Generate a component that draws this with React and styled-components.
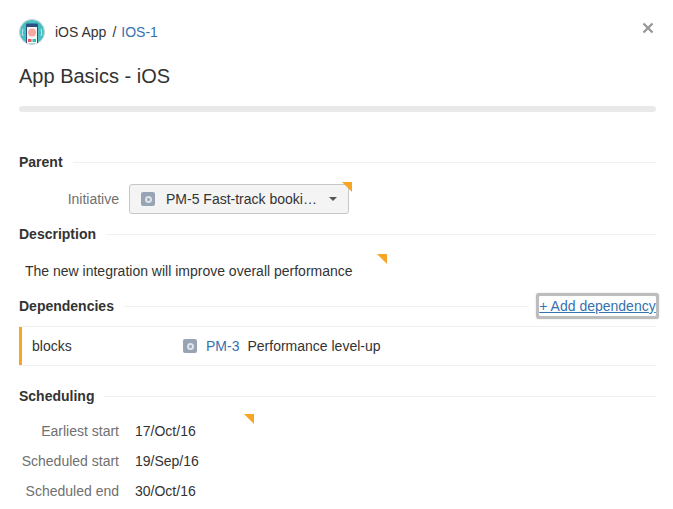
import React from 'react'
import styled, { createGlobalStyle } from 'styled-components'

const GlobalStyle = createGlobalStyle`
    html, body {
        margin: 0;
        background: #fff;
    }
    body {
        font-family: "Liberation Sans", Arial, sans-serif;
        font-size: 14px;
        line-height: 20px;
        color: #333;
    }
`
const Page = styled.div`
    position: relative;
    box-sizing: border-box;
    width: 673px;
    height: 509px;
    padding: 0 17px 0 19px;
    overflow: hidden;
`
const Breadcrumbs = styled.div`
    display: flex;
    align-items: center;
    height: 26px;
    padding-top: 19px;
`
const Avatar = styled.svg`
    width: 26px;
    height: 26px;
    margin-right: 10px;
    flex: none;
`
const Crumb = styled.span`
    margin-right: ${p => p.$gap || 5}px;
`
const Link = styled.a`
    color: #3572b0;
    text-decoration: none;
`
const Close = styled.svg`
    position: absolute;
    top: 22px;
    right: 19px;
    width: 12px;
    height: 12px;
`
const Title = styled.h1`
    margin: 16px 0 0;
    font-size: 20px;
    line-height: 30px;
    font-weight: 400;
`
const Progress = styled.div`
    height: 6px;
    margin: 15px 0 40px;
    border-radius: 3px;
    background: #e9e9e9;
`
const Heading = styled.div`
    display: flex;
    align-items: center;
    height: 20px;
    margin-top: ${p => p.$top || 0}px;
    font-weight: 700;
    &::before {
        content: '';
        order: 1;
        flex: 1;
        height: 1px;
        margin-left: 10px;
        background: #f0f0f0;
    }
`
const AddLink = styled.a`
    order: 2;
    width: 117px;
    margin-left: 10px;
    color: #3572b0;
    font-weight: 400;
    text-align: center;
    text-decoration: underline;
    white-space: nowrap;
    border-radius: 1px;
    box-shadow: 0 0 0 3px #bdbdbd, 0 0 2px 3px #d4d4d4;
`
const FieldRow = styled.div`
    position: relative;
    display: flex;
    align-items: center;
    height: ${p => p.$height || 30}px;
    margin-top: ${p => p.$top || 0}px;
`
const Label = styled.div`
    width: 100px;
    text-align: right;
    color: #707070;
    white-space: nowrap;
`
const Value = styled.div`
    margin-left: 16px;
`
const Select = styled.div`
    display: flex;
    align-items: center;
    width: 218px;
    height: 28px;
    margin-left: 10px;
    border: 1px solid #c7c7c7;
    border-radius: 3px;
    background: #f4f4f4;
`
const SelectText = styled.span`
    flex: 1;
    margin-left: 11px;
    white-space: nowrap;
`
const Caret = styled.span`
    width: 0;
    height: 0;
    margin-right: 11px;
    border-left: 4px solid transparent;
    border-right: 4px solid transparent;
    border-top: 4px solid #555;
`
const IssueIcon = styled.span`
    display: inline-flex;
    align-items: center;
    justify-content: center;
    flex: none;
    width: 14px;
    height: 14px;
    margin-left: ${p => p.$left || 0}px;
    border-radius: 2px;
    background: #97a4b4;
    &::after {
        content: '';
        width: 7px;
        height: 7px;
        box-sizing: border-box;
        border: 2px solid #dfe4ea;
        border-radius: 50%;
    }
`
const Flag = styled.span`
    position: absolute;
    top: ${p => p.$top}px;
    left: ${p => p.$left}px;
    width: 0;
    height: 0;
    border-top: 10px solid #f6a623;
    border-left: 10px solid transparent;
`
const Description = styled.div`
    position: relative;
    height: 30px;
    margin: 12px 0 0;
    padding: 5px 0 0 6px;
    box-sizing: border-box;
    white-space: nowrap;
`
const DependencyRow = styled.div`
    display: flex;
    align-items: center;
    height: 38px;
    margin-top: 10px;
    border-top: 1px solid #f0f0f0;
    border-bottom: 1px solid #f0f0f0;
    box-shadow: inset 3px 0 0 #f6a623;
`
const LinkType = styled.div`
    width: 151px;
    padding-left: 13px;
`
const IssueKey = styled(Link)`
    margin-left: 9px;
`
const IssueSummary = styled.span`
    margin-left: 8px;
`

function Field({ label, value, top, children }) {
    return (
        <FieldRow $top={top}>
            <Label>{label}</Label>
            <Value>{value}</Value>
            {children}
        </FieldRow>
    )
}

export default function App() {
    return (
        <Page>
            <GlobalStyle />
            <Breadcrumbs>
                <Avatar viewBox="0 0 26 26">
                    <circle cx="13" cy="13" r="12.5" fill="#45c1c4" stroke="#c9d0d2" strokeWidth="1" />
                    <path d="M7 24V5.5q0-1 1-1h10q1 0 1 1V24z" fill="#2e4f7f" />
                    <path d="M8 24.5V8h10v16.5z" fill="#f7f7f7" />
                    <circle cx="13" cy="13.5" r="4" fill="#f7a9a0" />
                    <rect x="9" y="20" width="3.5" height="3" fill="#f2545b" />
                    <rect x="13.5" y="20" width="3.5" height="3" fill="#35bdb8" />
                    <path d="M4 10q-1.5 3.5 0 7M22 10q1.5 3.5 0 7" fill="none" stroke="#bfeaea" strokeWidth="1" />
                </Avatar>
                <Crumb $gap={6}>iOS App</Crumb>
                <Crumb>/</Crumb>
                <Link>IOS-1</Link>
            </Breadcrumbs>
            <Close viewBox="0 0 12 12">
                <path d="M1.5 1.5l9 9M10.5 1.5l-9 9" stroke="#999" strokeWidth="2.4" />
            </Close>
            <Title>App Basics - iOS</Title>
            <Progress />

            <Heading>Parent</Heading>
            <FieldRow $top={12}>
                <Label>Initiative</Label>
                <Select>
                    <IssueIcon $left={11} />
                    <SelectText>PM-5 Fast-track booki…</SelectText>
                    <Caret />
                </Select>
                <Flag $top={-2} $left={323} />
            </FieldRow>

            <Heading $top={10}>Description</Heading>
            <Description>
                The new integration will improve overall performance
                <Flag $top={-2} $left={358} />
            </Description>

            <Heading $top={10}>
                Dependencies
                <AddLink>+ Add dependency</AddLink>
            </Heading>
            <DependencyRow>
                <LinkType>blocks</LinkType>
                <IssueIcon />
                <IssueKey>PM-3</IssueKey>
                <IssueSummary>Performance level-up</IssueSummary>
            </DependencyRow>

            <Heading $top={20}>Scheduling</Heading>
            <Field label="Earliest start" value="17/Oct/16" top={10}>
                <Flag $top={-2} $left={225} />
            </Field>
            <Field label="Scheduled start" value="19/Sep/16" />
            <Field label="Scheduled end" value="30/Oct/16" />
        </Page>
    )
}
